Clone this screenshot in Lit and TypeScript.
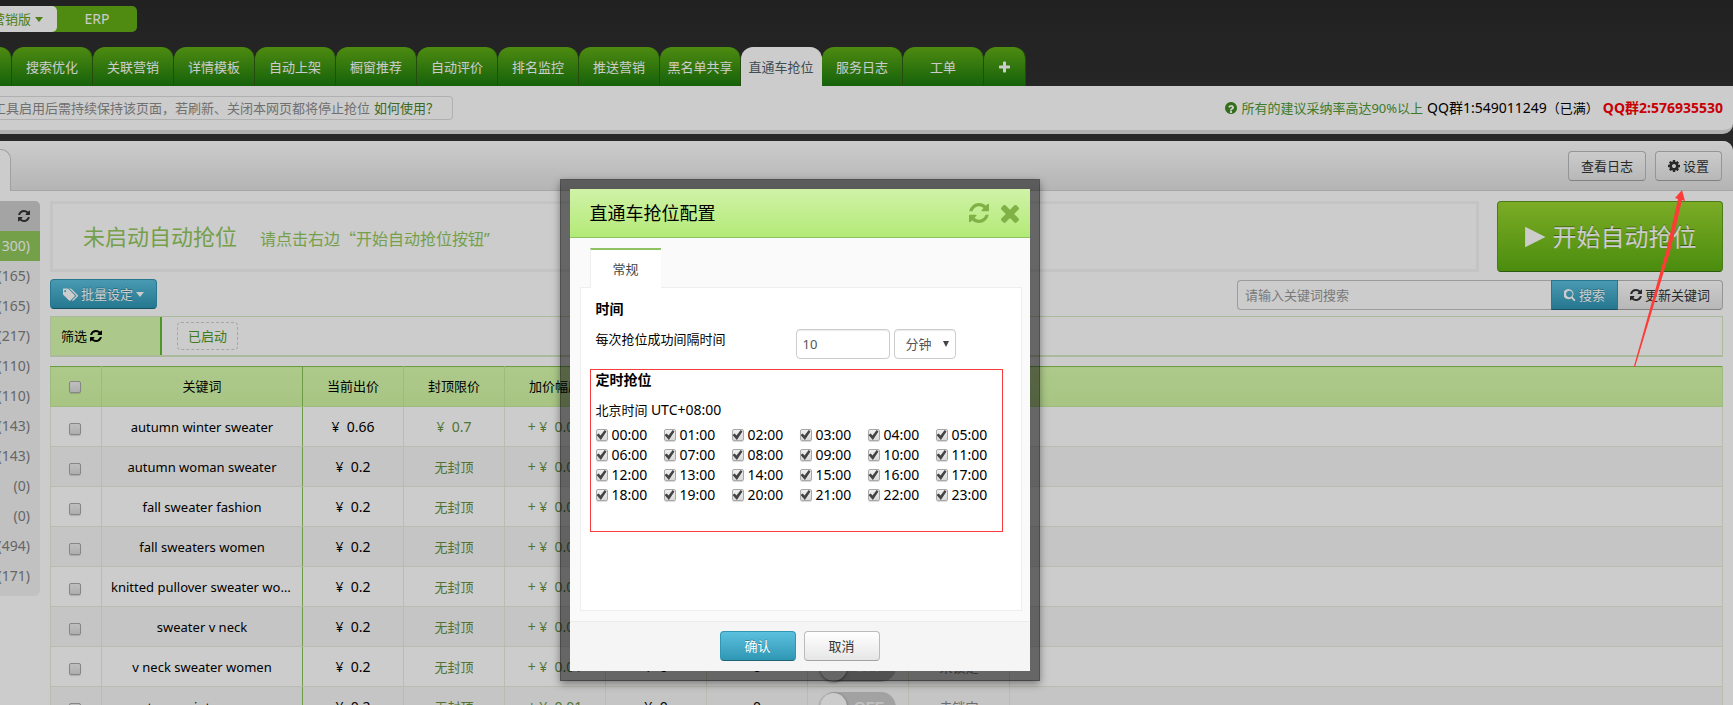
import { LitElement, html, css, svg } from "lit";
import { customElement, state } from "lit/decorators.js";

const refreshPath = "M1511 928q0 5-1 7-64 268-268 434.500t-478 166.500q-146 0-282.500-55t-243.500-157l-129 129q-19 19-45 19t-45-19-19-45v-448q0-26 19-45t45-19h448q26 0 45 19t19 45-19 45l-137 137q71 66 161 102t187 36q134 0 250-65t186-179q11-17 53-117 8-23 30-23h192q13 0 22.500 9.500t9.500 22.500zm25-800v448q0 26-19 45t-45 19h-448q-26 0-45-19t-19-45 19-45l138-138q-148-137-349-137-134 0-250 65t-186 179q-11 17-53 117-8 23-30 23h-199q-13 0-22.500-9.500t-9.500-22.500v-7q65-268 270-434.500t480-166.500q146 0 284 55.500t245 156.500l130-129q19-19 45-19t45 19 19 45z";
const icons = {
  refresh: svg`<path d=${refreshPath}></path>`,
  close: svg`<path d="M1426 1270q0 40-28 68l-136 136q-28 28-68 28t-68-28l-294-294-294 294q-28 28-68 28t-68-28l-136-136q-28-28-28-68t28-68l294-294-294-294q-28-28-28-68t28-68l136-136q28-28 68-28t68 28l294 294 294-294q28-28 68-28t68 28l136 136q28 28 28 68t-28 68l-294 294 294 294q28 28 28 68z"></path>`,
  plus: svg`<path d="M1408 672v192q0 40-28 68t-68 28h-416v416q0 40-28 68t-68 28h-192q-40 0-68-28t-28-68v-416h-416q-40 0-68-28t-28-68v-192q0-40 28-68t68-28h416v-416q0-40 28-68t68-28h192q40 0 68 28t28 68v416h416q40 0 68 28t28 68z"></path>`,
  question: svg`<path fill-rule="evenodd" d="M768 0a768 768 0 1 0 1 0zM896 1376v-192q0-14-9-23t-23-9h-192q-14 0-23 9t-9 23v192q0 14 9 23t23 9h192q14 0 23-9t9-23zm256-672q0-88-55.500-163t-138.500-116-170-41q-243 0-371 213-15 24 8 42l132 100q7 6 19 6 16 0 25-12 53-68 86-92 34-24 86-24 48 0 85.500 26t37.500 59q0 38-20 61t-68 45q-63 28-115.500 86.500t-52.500 125.500v36q0 14 9 23t23 9h192q14 0 23-9t9-23q0-19 21.500-49.500t54.500-49.500q32-18 49-28.500t46-35 44.500-48 28-60.500 12.500-81z"></path>`,
  gear: svg`<path fill-rule="evenodd" d="M1024 768q0-106-75-181t-181-75-181 75-75 181 75 181 181 75 181-75 75-181zm512-109v222q0 12-8 23t-20 13l-185 28q-19 54-39 91 35 50 107 138 10 12 10 25t-9 23q-27 37-99 108t-94 71q-12 0-26-9l-138-108q-44 23-91 38-16 136-29 186-7 28-36 28h-222q-14 0-24.500-8.500t-11.500-21.500l-28-184q-49-16-90-37l-141 107q-10 9-25 9-14 0-25-11-126-114-165-168-7-10-7-23 0-12 8-23 15-21 51-66.500t54-70.500q-27-50-41-99l-183-27q-13-2-21-12.500t-8-23.500v-222q0-12 8-23t19-13l186-28q14-46 39-92-40-57-107-138-10-12-10-24 0-10 9-23 26-36 98.500-107.500t94.500-71.500q13 0 26 10l138 107q44-23 91-38 16-136 29-186 7-28 36-28h222q14 0 24.500 8.500t11.500 21.500l28 184q49 16 90 37l142-107q9-9 24-9 13 0 25 10 129 119 165 170 7 8 7 22 0 12-8 23-15 21-51 66.500t-54 70.500q26 50 41 98l183 28q13 2 21 12.500t8 23.500z"></path>`,
  search: svg`<path fill-rule="evenodd" d="M1152 704q0-185-131.500-316.500t-316.500-131.500-316.500 131.500-131.500 316.500 131.500 316.500 316.500 131.500 316.500-131.500 131.500-316.500zm384 832q0 52-38 90t-90 38q-54 0-90-38l-343-342q-179 124-399 124-143 0-273.500-55.500t-225-150-150-225-55.500-273.500 55.500-273.500 150-225 225-150 273.500-55.500 273.500 55.500 225 150 150 225 55.500 273.500q0 220-124 399l343 343q37 37 37 90z"></path>`,
  play: svg`<path d="M80 60l1420 708-1420 708z"></path>`,
  tags: svg`<path fill-rule="evenodd" d="M384 384q0-53-37.500-90.500t-90.500-37.500-90.500 37.500-37.500 90.500 37.500 90.500 90.500 37.500 90.500-37.500 37.500-90.500zm1067 576q0 53-37 90l-491 492q-39 37-91 37-53 0-90-37l-715-716q-38-37-64.500-101t-26.500-117v-416q0-52 38-90t90-38h416q53 0 117 26.500t102 64.500l715 714q37 39 37 91zm384 0q0 53-37 90l-491 492q-39 37-91 37-36 0-59-14t-53-45l470-470q37-37 37-90 0-52-37-91l-715-714q-38-38-102-64.500t-117-26.500h224q53 0 117 26.500t102 64.500l715 714q37 39 37 91z"></path>`,
};

const viewBoxes: Record<string, string> = {
  tags: "0 0 1836 1600",
  search: "0 0 1600 1664",
  close: "110 186 1316 1316",
};

const icon = (name: keyof typeof icons) =>
  html`<svg class="icon" viewBox=${viewBoxes[name] ?? "0 0 1536 1536"} aria-hidden="true">${icons[name]}</svg>`;

const caret = () => html`<svg class="caret" viewBox="0 0 8 5" aria-hidden="true"><path d="M0 0h8l-4 5z"></path></svg>`;

const tabs = ["搜索优化", "关联营销", "详情模板", "自动上架", "橱窗推荐", "自动评价", "排名监控", "推送营销", "黑名单共享", "直通车抢位", "服务日志", "工单"];
const groups = ["(1300)", "(165)", "(165)", "(217)", "(110)", "(110)", "(143)", "(143)", "(0)", "(0)", "(494)", "(171)"];
const rows = [
  ["autumn winter sweater", "0.66", "¥  0.7"],
  ["autumn woman sweater", "0.2", "无封顶"],
  ["fall sweater fashion", "0.2", "无封顶"],
  ["fall sweaters women", "0.2", "无封顶"],
  ["knitted pullover sweater women", "0.2", "无封顶"],
  ["sweater v neck", "0.2", "无封顶"],
  ["v neck sweater women", "0.2", "无封顶"],
  ["autumn winter women", "0.2", "无封顶"],
];
const hours = Array.from({ length: 24 }, (_, h) => `${String(h).padStart(2, "0")}:00`);

const base = css`
  * { box-sizing: border-box; }
  button, input, select {
    font: inherit;
    margin: 0;
  }
  a { text-decoration: none; }
  .icon {
    width: 12px;
    height: 12px;
    fill: currentColor;
    flex: none;
  }
  .latin { font-size: 14px; }
  .btn {
    display: inline-flex;
    align-items: center;
    justify-content: center;
    gap: 3px;
    height: 30px;
    padding: 0 12px;
    border: 1px solid #bbb;
    border-bottom-color: #a2a2a2;
    border-radius: 4px;
    background: linear-gradient(#fff, #e6e6e6);
    color: #333;
    white-space: nowrap;
  }
  .btn.primary {
    border-color: #2f96b4;
    border-bottom-color: #1f6377;
    background: linear-gradient(#5bc0de, #2f96b4);
    color: #fff;
    text-shadow: 0 -1px 0 rgba(0, 0, 0, 0.25);
  }
  .check {
    appearance: none;
    display: inline-grid;
    place-items: center;
    width: 12px;
    height: 12px;
    border: 1px solid #a8a8a8;
    border-radius: 2px;
    background: linear-gradient(#efefef, #dadada);
    box-shadow: 0 1px 1px rgba(0, 0, 0, 0.15);
  }
  .check:checked::before {
    content: "";
    width: 10px;
    height: 10px;
    background: #444;
    clip-path: polygon(0 50%, 22% 36%, 40% 56%, 82% 0, 100% 16%, 44% 100%);
  }
`;

@customElement("config-dialog")
class ConfigDialog extends LitElement {
  static styles = [base, css`
    :host {
      display: flex;
      flex-direction: column;
      width: 480px;
      border: 10px solid rgba(0, 0, 0, 0.5);
      background: #fafafa;
      background-clip: padding-box;
      box-shadow: 0 3px 8px rgba(0, 0, 0, 0.4);
      color: #000;
    }
    .head {
      display: flex;
      align-items: center;
      gap: 10px;
      height: 49px;
      padding: 0 11px 0 20px;
      border-bottom: 1px solid #8dc461;
      background: linear-gradient(#d0f2a8, #b3ea77);
    }
    .title {
      flex: 1;
      margin: 0;
      font-size: 18px;
      font-weight: 400;
    }
    .tool {
      display: flex;
      padding: 0;
      border: 0;
      background: none;
      color: #7fb146;
    }
    .tool .icon { width: 20px; height: 20px; }
    .content { padding: 10px 8px 10px 10px; }
    .tabs { display: flex; padding-left: 10px; }
    .tab {
      width: 71px;
      height: 40px;
      margin-bottom: -1px;
      border: 1px solid #eee;
      border-top: 2px solid #8dc461;
      border-bottom: 0;
      border-right: 0;
      background: #fff;
      color: #444;
      padding: 0;
      position: relative;
    }
    .panel {
      height: 324px;
      border: 1px solid #eee;
      background: #fff;
      padding: 10px 15px;
    }
    .heading { margin: 0; font-size: 14px; line-height: 22px; }
    .interval {
      display: grid;
      grid-template-columns: 196px 94px 62px;
      gap: 4px;
      margin-top: 9px;
    }
    .interval label { line-height: 20px; }
    .interval input, .interval select {
      height: 30px;
      border: 1px solid #ccc;
      border-radius: 4px;
      background: #fff;
      color: #555;
      box-shadow: inset 0 1px 1px rgba(0, 0, 0, 0.075);
      padding: 0 6px;
      min-width: 0;
    }
    .unit { position: relative; display: grid; }
    .unit select { appearance: none; padding-left: 11px; }
    .unit .icon {
      position: absolute;
      right: 7px;
      top: 12px;
      width: 6px;
      height: 6px;
      fill: #444;
    }
    .schedule {
      margin: 10px 3px 0 -6px;
      height: 163px;
      border: 1px solid #f93c3c;
      padding: 0 5px;
    }
    .schedule .heading { line-height: 20px; }
    .zone { margin: 10px 0 5px; line-height: 20px; }
    .hours { display: grid; grid-template-columns: repeat(6, 68px); }
    .hour {
      display: flex;
      align-items: center;
      gap: 4px;
      height: 20px;
      font-size: 14px;
    }
    .foot {
      display: flex;
      justify-content: center;
      gap: 8px;
      padding: 9px 0 10px;
      border-top: 1px solid #ececec;
      background: #f5f5f5;
    }
    .foot .btn { width: 76px; }
  `];

  render() {
    return html`
      <header class="head">
        <h2 class="title">直通车抢位配置</h2>
        <button class="tool" aria-label="刷新">${icon("refresh")}</button>
        <button class="tool" aria-label="关闭">${icon("close")}</button>
      </header>
      <div class="content">
        <div class="tabs"><button class="tab">常规</button></div>
        <div class="panel">
          <h3 class="heading">时间</h3>
          <div class="interval">
            <label for="gap">每次抢位成功间隔时间</label>
            <input id="gap" type="text" value="10" />
            <div class="unit">
              <select aria-label="单位"><option>分钟</option></select>
              <svg class="icon" viewBox="0 0 6 6" aria-hidden="true"><path d="M0 0h6l-3 6z"></path></svg>
            </div>
          </div>
          <section class="schedule">
            <h3 class="heading">定时抢位</h3>
            <p class="zone">北京时间 <span class="latin">UTC+08:00</span></p>
            <div class="hours">
              ${hours.map((h) => html`<label class="hour"><input class="check" type="checkbox" checked />${h}</label>`)}
            </div>
          </section>
        </div>
      </div>
      <footer class="foot">
        <button class="btn primary">确认</button>
        <button class="btn">取消</button>
      </footer>
    `;
  }
}

@customElement("app-root")
class AppRoot extends LitElement {
  @state() activeTab = 9;

  static styles = [base, css`
    :host {
      display: block;
      position: relative;
      height: 100vh;
      overflow: hidden;
      background: linear-gradient(#2a2a2a, #333 140px);
      font: 13px/20px "Noto Sans", "Noto Sans CJK SC", sans-serif;
      color: #000;
    }
    .top { display: flex; height: 47px; padding-top: 6px; align-items: flex-start; }
    .editions {
      display: flex;
      height: 26px;
      line-height: 26px;
      border-radius: 0 5px 5px 0;
      background: #62ae15;
      font-size: 14px;
      white-space: nowrap;
    }
    .version {
      display: flex;
      align-items: center;
      justify-content: flex-end;
      gap: 4px;
      width: 57px;
      padding-right: 14px;
      border-radius: 0 5px 5px 0;
      background: #fff;
      color: #62a01b;
      font-size: 13px;
    }
    .erp {
      width: 80px;
      color: #fff;
      text-align: center;
    }
    .caret { width: 8px; height: 5px; fill: currentColor; flex: none; }
    .nav { display: flex; }
    .nav-tab {
      width: 81px;
      height: 39px;
      padding: 0;
      border: 0;
      border-right: 1px solid #2c5f12;
      border-radius: 12px 12px 0 0;
      background: linear-gradient(#62ae15, #1b7a0e);
      color: #fff;
      font-size: 13px;
      line-height: 38px;
      white-space: nowrap;
      display: flex;
      align-items: center;
      justify-content: center;
    }
    .nav-tab.first { width: 12px; border-radius: 0 12px 0 0; }
    .nav-tab.add { width: 42px; }
    .nav-tab.active { background: #fff; color: #50606a; border-right-color: #fff; }
    .notice {
      display: flex;
      align-items: center;
      justify-content: space-between;
      height: 48px;
      padding: 0 10px 0 0;
      border-bottom: 4px solid #dedede;
      border-radius: 0 0 10px 0;
      background: #fff;
    }
    .tip {
      display: flex;
      justify-content: flex-end;
      gap: 4px;
      width: 453px;
      height: 24px;
      line-height: 22px;
      padding-right: 13px;
      border: 1px solid #ddd;
      border-left: 0;
      border-radius: 0 4px 4px 0;
      color: #8c8c8c;
      white-space: nowrap;
      overflow: hidden;
    }
    .tip a { color: #4b852b; }
    .contact { display: flex; align-items: center; gap: 4px; }
    .contact a { color: #4e9a34; }
    .contact .icon { color: #3f8a23; }
    .contact strong { color: #fb0007; }
    .page {
      margin-top: 7px;
      border-radius: 0 10px 0 0;
      background: #fff;
      overflow: hidden;
    }
    .toolbar {
      display: flex;
      justify-content: flex-end;
      align-items: center;
      gap: 9px;
      height: 50px;
      padding-right: 11px;
      border-bottom: 1px solid #d0d0d0;
      background: linear-gradient(#fff, #e2e2e2);
    }
    .toolbar .page-tab {
      align-self: flex-end;
      width: 11px;
      height: 42px;
      margin: 0 auto -1px 0;
      border: 1px solid #c8c8c8;
      border-width: 1px 1px 0 0;
      border-radius: 0 10px 0 0;
      background: #fff;
    }
    .body {
      display: grid;
      grid-template-columns: 40px minmax(0, 1fr);
      gap: 10px;
      align-items: start;
      padding: 10px 10px 0 0;
    }
    .groups {
      padding-bottom: 5px;
      border-radius: 0 5px 6px 0;
      background: #f2f2f2;
      overflow: hidden;
    }
    .group {
      display: flex;
      align-items: center;
      justify-content: flex-end;
      height: 30px;
      padding-right: 10px;
      font-size: 14px;
      color: #808080;
    }
    .group.head { background: #cdcdcd; color: #333; }
    .group.active { background: #92c85d; color: #fff; }
    .hero { display: flex; gap: 18px; }
    .status {
      flex: 1;
      display: flex;
      align-items: baseline;
      gap: 23px;
      height: 71px;
      padding: 0 30px;
      border: 3px solid #f5f5f5;
      color: #92c85d;
      font-size: 16px;
      line-height: 64px;
    }
    .status strong { font-size: 22px; font-weight: 400; }
    .quote { font-family: "Noto Sans CJK SC", sans-serif; }
    .start {
      width: 226px;
      height: 71px;
      gap: 7px;
      border-color: #5c9a20 #5c9a20 #387011;
      background: linear-gradient(#9bd72f, #5eb012);
      color: #fff;
      font-size: 24px;
      text-shadow: 0 -1px 0 rgba(0, 0, 0, 0.35);
    }
    .start .icon { width: 22px; height: 22px; }
    .actions { display: flex; justify-content: space-between; margin-top: 7px; }
    .batch .icon { width: 15px; height: 13px; }
    .find { display: flex; margin-top: 1px; }
    .find input {
      width: 314px;
      height: 30px;
      padding: 0 7px;
      border: 1px solid #c4c4c4;
      border-right: 0;
      border-radius: 4px 0 0 4px;
      background: #fff;
      color: #555;
    }
    .find input::placeholder { color: #999; opacity: 1; }
    .find .primary { border-radius: 0; }
    .find .btn:last-child { border-radius: 0 4px 4px 0; border-left: 0; }
    .filter {
      display: flex;
      align-items: stretch;
      height: 41px;
      margin-top: 6px;
      border: 1px solid #d8e9c4;
      border-bottom-width: 2px;
    }
    .filter-name {
      display: flex;
      align-items: center;
      gap: 3px;
      width: 111px;
      padding-left: 10px;
      border-right: 2px solid #62bd30;
      background: #d8fbad;
    }
    .chip {
      align-self: center;
      height: 28px;
      margin-left: 15px;
      padding: 0 10px;
      border: 1px dashed #d0d0d0;
      border-radius: 4px;
      background: none;
      color: #4e9a24;
      line-height: 24px;
    }
    .table {
      width: 100%;
      margin-top: 9px;
      border-collapse: collapse;
      table-layout: fixed;
      border-left: 1px solid #cfcfcf;
      border-right: 1px solid #cfcfcf;
    }
    .col-check { width: 51px; }
    .col-word { width: 201px; }
    .col { width: 101px; }
    th, td {
      height: 40px;
      padding: 0 9px;
      border: 1px solid #e9ecdc;
      text-align: center;
      font-weight: 400;
      white-space: pre;
      overflow: hidden;
      text-overflow: ellipsis;
    }
    th {
      padding-bottom: 2px;
      border-color: #c6ea9f;
      border-top-color: #88c455;
      background: linear-gradient(#dafdae, #d2f6a5);
    }
    tr:nth-child(even) td { background: #f7f7f7; }
    td { font-size: 14px; }
    td.tick { padding: 2px 12px 0 9px; }
    th.tick { padding-right: 12px; }
    .word { border-right-color: #88c455; }
    td.word { font-size: 13px; }
    .limit { color: #649140; }
    td.cn { font-size: 13px; }
    td.muted { color: #888; font-size: 13px; }
    .tick .check { vertical-align: middle; }
    .switch {
      display: inline-flex;
      align-items: center;
      gap: 7px;
      width: 76px;
      height: 30px;
      padding: 0;
      border: 0;
      border-radius: 15px;
      background: #cbcbcb;
      color: #eee;
      font: 700 15px/30px "Liberation Sans", sans-serif;
      vertical-align: middle;
    }
    .switch::before {
      content: "";
      width: 27px;
      height: 28px;
      border-radius: 14px;
      background: #fff;
      box-shadow: 0 1px 3px rgba(0, 0, 0, 0.5);
    }
    .backdrop {
      position: absolute;
      inset: 0;
      background: rgba(0, 0, 0, 0.2);
    }
    .dialog {
      position: absolute;
      top: 179px;
      left: calc(50% - 307px);
    }
    .arrow {
      position: absolute;
      top: 190px;
      right: 48px;
      width: 52px;
      height: 177px;
      fill: #fd3b38;
    }
  `];

  render() {
    return html`
      <div class="top">
        <div class="editions">
          <div class="version">营销版${caret()}</div>
          <div class="erp">ERP</div>
        </div>
      </div>
      <nav class="nav">
        <button class="nav-tab first" aria-label="首页"></button>
        ${tabs.map((t, i) => html`<button class="nav-tab ${i === this.activeTab ? "active" : ""}" @click=${() => (this.activeTab = i)}>${t}</button>`)}
        <button class="nav-tab add" aria-label="添加">${icon("plus")}</button>
      </nav>
      <div class="notice">
        <div class="tip"><span>工具启用后需持续保持该页面，若刷新、关闭本网页都将停止抢位</span><a href="#">如何使用？</a></div>
        <div class="contact">
          ${icon("question")}<a href="#">所有的建议采纳率高达90%以上</a>
          <span><span class="latin">QQ群1:549011249</span>（已满）</span><strong class="latin">QQ群2:576935530</strong>
        </div>
      </div>
      <main class="page">
        <div class="toolbar">
          <span class="page-tab"></span>
          <button class="btn">查看日志</button>
          <button class="btn">${icon("gear")}设置</button>
        </div>
        <div class="body">
          <aside class="groups">
            <div class="group head">${icon("refresh")}</div>
            ${groups.map((g, i) => html`<div class="group ${i === 0 ? "active" : ""}">${g}</div>`)}
          </aside>
          <div>
            <div class="hero">
              <div class="status"><strong>未启动自动抢位</strong><span>请点击右边<span class="quote">“</span>开始自动抢位按钮”</span></div>
              <button class="btn start">${icon("play")}开始自动抢位</button>
            </div>
            <div class="actions">
              <button class="btn primary batch">${icon("tags")}批量设定${caret()}</button>
              <div class="find">
                <input type="text" aria-label="关键词" placeholder="请输入关键词搜索" />
                <button class="btn primary">${icon("search")}搜索</button>
                <button class="btn">${icon("refresh")}更新关键词</button>
              </div>
            </div>
            <div class="filter">
              <div class="filter-name">筛选${icon("refresh")}</div>
              <button class="chip">已启动</button>
            </div>
            <table class="table">
              <colgroup>
                <col class="col-check" /><col class="col-word" />
                ${Array.from({ length: 7 }, () => html`<col class="col" />`)}
                <col />
              </colgroup>
              <thead>
                <tr>
                  <th class="tick"><input class="check" type="checkbox" aria-label="全选" /></th>
                  <th class="word">关键词</th>
                  <th>当前出价</th><th>封顶限价</th><th>加价幅度</th>
                  <th></th><th></th><th></th><th></th><th></th>
                </tr>
              </thead>
              <tbody>
                ${rows.map(([word, price, limit]) => html`<tr>
                  <td class="tick"><input class="check" type="checkbox" aria-label=${word} /></td>
                  <td class="word">${word}</td>
                  <td>${`¥  ${price}`}</td>
                  <td class="limit ${limit === "无封顶" ? "cn" : ""}">${limit}</td>
                  <td class="limit">${"+ ¥  0.01"}</td>
                  <td>${"¥  0"}</td>
                  <td>0</td>
                  <td><button class="switch">OFF</button></td>
                  <td class="muted">未锁定</td>
                  <td></td>
                </tr>`)}
              </tbody>
            </table>
          </div>
        </div>
      </main>
      <div class="backdrop"></div>
      <config-dialog class="dialog" role="dialog" aria-label="直通车抢位配置"></config-dialog>
      <svg class="arrow" viewBox="0 0 52 177" aria-hidden="true"><path d="M49 0L52 11L49 10L38 58L2 177L1 176L34 58L45 9L42 8z"></path></svg>
    `;
  }
}
